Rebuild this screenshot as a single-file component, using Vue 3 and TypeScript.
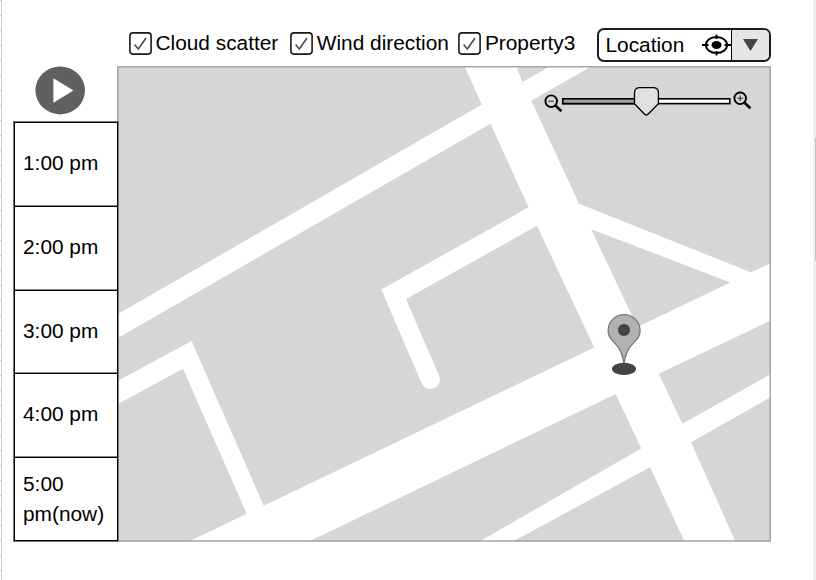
<script setup lang="ts">
import { ref } from 'vue'

interface Layer {
  label: string
  checked: boolean
}

const layers = ref<Layer[]>([
  { label: 'Cloud scatter', checked: true },
  { label: 'Wind direction', checked: true },
  { label: 'Property3', checked: true },
])

const times: string[] = ['1:00 pm', '2:00 pm', '3:00 pm', '4:00 pm', '5:00 pm(now)']

// City blocks; the white gaps between them are the roads.
const blocks: string[] = [
  'M117 66H464.5L481.8 104.5L117 314.6Z',
  'M516 66H550.5L522.5 82Z',
  'M592 66H771V263L751 272.3L579 203.7L531.3 100.7Z',
  'M117 338.4L490.5 123.7L528.5 207.3L381.3 289.5L422 384A9.1 9.1 0 1 0 438.8 375L406 299L537 225.8L594.2 347.5L263.7 505.7L191.6 341L117 381.2Z',
  'M117 404.6L183 368.7L246.7 513.7L188 542H117Z',
  'M591.2 229.2L730.4 282.4L637.3 327.1Z',
  'M771 320.3L658.8 373.7L682.3 423.8L771 374Z',
  'M771 397L691 442.3L735.6 542H771Z',
  'M308 542L615.7 394L641.2 448.5L478.5 542Z',
  'M512 542L650 467.3L684.8 542Z',
]

function toggle(layer: Layer): void {
  layer.checked = !layer.checked
}
</script>

<template>
  <div class="page">
    <div class="ruler"></div>

    <aside class="timeline">
      <button class="play" aria-label="Play">
        <svg width="50" height="50" viewBox="0 0 50 50">
          <ellipse cx="25.2" cy="24.4" rx="24.8" ry="24" fill="#606060" />
          <path d="M18.4 12.2V36.8L38.4 24.5Z" fill="#fff" />
        </svg>
      </button>
      <div class="times">
        <div v-for="time in times" :key="time" class="time">{{ time }}</div>
      </div>
    </aside>

    <main class="content">
      <header class="toolbar">
        <div
          v-for="layer in layers"
          :key="layer.label"
          class="layer"
          @click="toggle(layer)"
        >
          <svg class="box" width="23" height="23" viewBox="0 0 23 23">
            <rect x=".9" y=".9" width="21.2" height="21.2" rx="3" fill="#fff" stroke="#1a1a1a" stroke-width="1.6" />
            <path v-if="layer.checked" d="M5.6 12.6L9.3 17L17 6" fill="none" stroke="#444" stroke-width="1.5" />
          </svg>
          <span>{{ layer.label }}</span>
        </div>

        <div class="select">
          <span class="value">Location</span>
          <svg class="target" width="29" height="22" viewBox="0 0 29 22">
            <ellipse cx="14.5" cy="11" rx="10.6" ry="8" fill="none" stroke="#000" stroke-width="1.9" />
            <ellipse cx="14.5" cy="11" rx="5" ry="4" />
            <path d="M0 11H6.5M22.5 11H29M14.5 .5V5M14.5 17V21.5" stroke="#000" stroke-width="1.8" />
          </svg>
          <div class="arrow">
            <svg width="15" height="12" viewBox="0 0 15 12"><path d="M0 0H15L7.5 12Z" fill="#444" /></svg>
          </div>
        </div>
      </header>

      <section class="map">
        <svg class="streets" width="654" height="476" viewBox="117 66 654 476">
          <rect x="117" y="66" width="654" height="476" fill="#fff" />
          <path v-for="block in blocks" :key="block" :d="block" fill="#d6d6d6" />
          <rect x="117.75" y="66.75" width="652.5" height="474.2" fill="none" stroke="#a6a6a6" stroke-width="1.5" />
        </svg>

        <svg class="zoom-bar" width="210" height="34" viewBox="542 84 210 34">
          <g fill="none" stroke="#000">
            <circle cx="551.2" cy="101.2" r="5.8" stroke-width="1.9" />
            <path d="M555.6 105.6L561.4 111.2" stroke-width="2.6" />
            <path d="M548.4 101.2H554" stroke="#333" stroke-width="1.1" />
            <circle cx="740.2" cy="98.3" r="5.8" stroke-width="1.9" />
            <path d="M744.6 102.7L750.4 108.3" stroke-width="2.6" />
            <path d="M737.4 98.3H743M740.2 95.5V101.1" stroke="#333" stroke-width="1.1" />
          </g>
          <rect x="562.8" y="98.8" width="167" height="4.8" fill="#fff" stroke="#000" stroke-width="1.6" />
          <rect x="562.8" y="98.8" width="84" height="4.8" fill="#a0a0a0" stroke="#000" stroke-width="1.6" />
          <path d="M639 87.7H654Q658.3 88.2 658.4 92.5V103.8L648 114.2Q646.3 115.9 644.6 114.2L634.5 103.8V92.5Q634.8 88.2 639 87.7Z" fill="#e0e0e0" stroke="#000" stroke-width="1.3" />
        </svg>

        <svg class="pin" width="36" height="64" viewBox="606 312 36 64">
          <path d="M624 363.5C621.5 342 608.1 342.5 608.1 330.7A15.9 15.9 0 0 1 640.1 330.7C640.1 342.5 626.5 342 624 363.5Z" fill="#b2b2b2" stroke="#777" stroke-width="1.3" />
          <circle cx="624" cy="330" r="6.1" fill="#444" />
          <ellipse cx="624" cy="368.9" rx="12" ry="6.1" fill="#444" />
        </svg>
      </section>
    </main>

    <div class="scrollbar"><div class="thumb"></div></div>
  </div>
</template>

<style>
body {
  margin: 0;
  background: #fff;
  overflow: hidden;
}
</style>

<style scoped>
.page {
  display: flex;
  width: 816px;
  height: 580px;
  overflow: hidden;
  font-family: "Liberation Sans", Arial, sans-serif;
  font-size: 20.85px;
  color: #000;
}
.ruler {
  box-sizing: border-box;
  width: 2px;
  border-right: 1px solid #ccc;
  background: repeating-linear-gradient(#ccc 0 1px, #fff 1px 15px);
}
.timeline {
  width: 104px;
  padding: 66px 0 0 12px;
  box-sizing: content-box;
}
.play {
  display: block;
  width: 50px;
  height: 50px;
  margin: 0 0 5px 21px;
  padding: 0;
  border: 0;
  background: none;
}
.play svg {
  display: block;
}
.times {
  position: relative;
  z-index: 1;
  display: grid;
  box-sizing: border-box;
  width: 106px;
  height: 421px;
  margin-left: -1px;
  grid-template-rows: 84px 84px 83px 84px 84px;
  border: 1px solid #777;
}
.time {
  display: flex;
  align-items: center;
  box-sizing: border-box;
  padding: 0 5px 3px 8px;
  border: solid #000;
  border-width: 1px 1px 0;
  line-height: 29.3px;
}
.time:not(:last-child) {
  box-shadow: inset 0 -1px #888;
}
.time:last-child {
  padding-bottom: 1px;
  border-bottom-width: 1px;
}
.content {
  width: 654px;
  margin-left: -1px;
  padding-top: 28px;
}
.toolbar {
  display: flex;
  align-items: center;
  box-sizing: border-box;
  height: 38px;
  padding: 0 0 4px 12px;
}
.layer {
  display: flex;
  align-items: center;
  gap: 3.5px;
  height: 23px;
  margin: 0 12px 5px 0;
  white-space: nowrap;
}
.layer:nth-child(2) {
  margin-right: 9.5px;
}
.box {
  flex: none;
  margin-top: 2px;
}
.select {
  display: flex;
  align-items: center;
  box-sizing: border-box;
  width: 174px;
  height: 34px;
  margin-left: auto;
  border: 2px solid #1c1c1c;
  border-radius: 7px;
  background: #fff;
  overflow: hidden;
}
.value {
  width: 96px;
  padding-left: 6.5px;
}
.target {
  flex: none;
}
.arrow {
  display: flex;
  flex: 1;
  align-items: center;
  justify-content: center;
  align-self: stretch;
  border-left: 1px solid #000;
  background: #e6e6e6;
}
.map {
  position: relative;
  width: 654px;
  height: 476px;
}
.streets {
  display: block;
}
.zoom-bar {
  position: absolute;
  left: 425px;
  top: 18px;
}
.pin {
  position: absolute;
  left: 489px;
  top: 246px;
}
.scrollbar {
  width: 3px;
  margin-left: auto;
  padding: 138px 0 0;
  background: #f0f0f0;
}
.thumb {
  width: 1px;
  height: 123px;
  margin-left: 2px;
  background: #c1c1c1;
}
</style>
